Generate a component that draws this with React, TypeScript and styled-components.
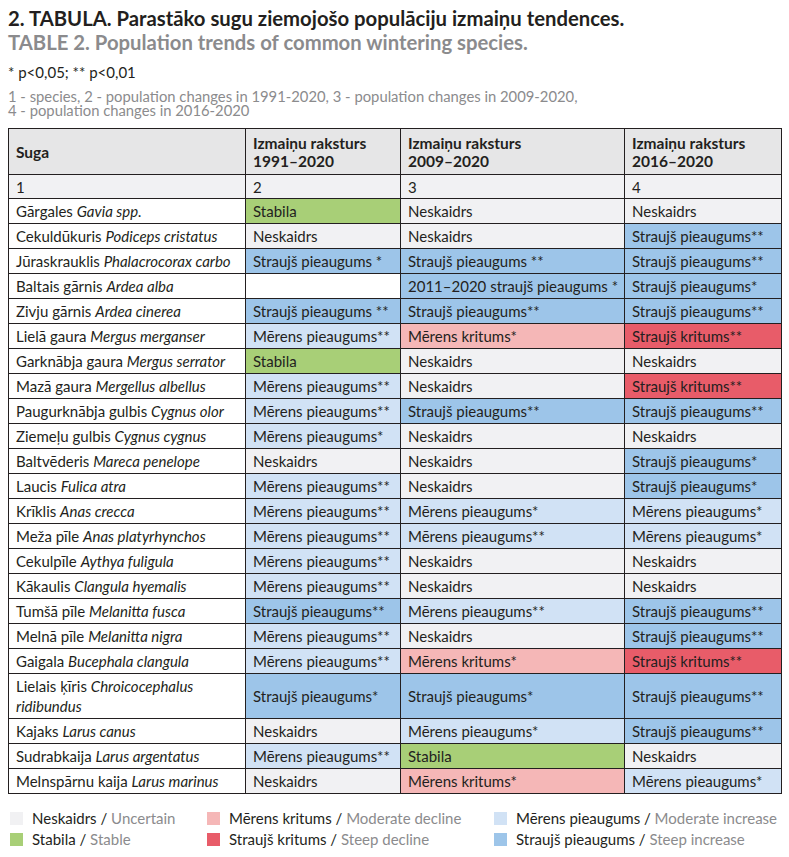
import React from "react";
import styled, { createGlobalStyle } from "styled-components";

const Global = createGlobalStyle`
  html, body { margin: 0; padding: 0; background: #fff; }
  body { font-family: Lato, "Open Sans", sans-serif; color: #231f20; }
`;

type Kind = "u" | "s" | "md" | "sd" | "mi" | "si" | "w";

const COLORS: Record<Kind, string> = {
  u: "#f1f1f3",
  s: "#a8cf77",
  md: "#f5b7b7",
  sd: "#e85c69",
  mi: "#d1e2f5",
  si: "#9dc5e9",
  w: "#ffffff",
};

const Page = styled.div`
  padding: 6px 8px 0 8px;
  width: 773px;
`;

const Title = styled.div<{ $gray?: boolean }>`
  font-weight: 700;
  font-size: 20.3px;
  line-height: 24px;
  white-space: nowrap;
  color: ${(p) => (p.$gray ? "#8b8b8d" : "#231f20")};
`;

const Sig = styled.div`
  font-size: 15px;
  margin-top: 9px;
  line-height: 18px;
`;

const Note = styled.div`
  font-size: 14.8px;
  line-height: 13.5px;
  color: #8b8b8d;
  margin-top: 9px;
`;

const Table = styled.table`
  margin-top: 11px;
  border-collapse: collapse;
  width: 773px;
  table-layout: fixed;
  font-size: 15px;
  border: 1.5px solid #231f20;
`;

const Th = styled.th`
  background: #e6e6e7;
  border: 1px solid #231f20;
  text-align: left;
  font-weight: 700;
  font-size: 15.5px;
  padding: 4px 7px;
  line-height: 18px;
  height: 37px;
  vertical-align: middle;
`;

const NumCell = styled.td`
  background: #f1f1f3;
  border: 1px solid #231f20;
  padding: 0 7px;
  height: 23px;
  line-height: 18px;
`;

const Cell = styled.td<{ $kind: Kind; $wrap?: boolean }>`
  background: ${(p) => COLORS[p.$kind]};
  border: 1px solid #231f20;
  padding: 2px 7px;
  height: 20px;
  line-height: 20px;
  vertical-align: middle;
  white-space: ${(p) => (p.$wrap ? "normal" : "nowrap")};
`;

const Latin = styled.i`
  font-style: italic;
`;

const Legend = styled.div`
  display: grid;
  grid-template-columns: 197px 287px 1fr;
  row-gap: 3px;
  margin-top: 15px;
  padding-left: 2px;
  font-size: 15px;
  line-height: 18px;
`;

const LegendItem = styled.div`
  display: flex;
  align-items: center;
  gap: 9px;
`;

const Swatch = styled.span<{ $kind: Kind }>`
  width: 13px;
  height: 13px;
  background: ${(p) => COLORS[p.$kind]};
  flex: none;
`;

const En = styled.span`
  color: #8b8b8d;
`;

type Row = [string, string, [string, Kind], [string, Kind], [string, Kind]];

const U: [string, Kind] = ["Neskaidrs", "u"];
const S: [string, Kind] = ["Stabila", "s"];

const rows: Row[] = [
  ["Gārgales", "Gavia spp.", S, U, U],
  ["Cekuldūkuris", "Podiceps cristatus", U, U, ["Straujš pieaugums**", "si"]],
  ["Jūraskrauklis", "Phalacrocorax carbo", ["Straujš pieaugums *", "si"], ["Straujš pieaugums **", "si"], ["Straujš pieaugums**", "si"]],
  ["Baltais gārnis", "Ardea alba", ["", "w"], ["2011–2020 straujš pieaugums *", "si"], ["Straujš pieaugums*", "si"]],
  ["Zivju gārnis", "Ardea cinerea", ["Straujš pieaugums **", "si"], ["Straujš pieaugums**", "si"], ["Straujš pieaugums**", "si"]],
  ["Lielā gaura", "Mergus merganser", ["Mērens pieaugums**", "mi"], ["Mērens kritums*", "md"], ["Straujš kritums**", "sd"]],
  ["Garknābja gaura", "Mergus serrator", S, U, U],
  ["Mazā gaura", "Mergellus albellus", ["Mērens pieaugums**", "mi"], U, ["Straujš kritums**", "sd"]],
  ["Paugurknābja gulbis", "Cygnus olor", ["Mērens pieaugums**", "mi"], ["Straujš pieaugums**", "si"], ["Straujš pieaugums**", "si"]],
  ["Ziemeļu gulbis", "Cygnus cygnus", ["Mērens pieaugums*", "mi"], U, U],
  ["Baltvēderis", "Mareca penelope", U, U, ["Straujš pieaugums*", "si"]],
  ["Laucis", "Fulica atra", ["Mērens pieaugums**", "mi"], U, ["Straujš pieaugums*", "si"]],
  ["Krīklis", "Anas crecca", ["Mērens pieaugums**", "mi"], ["Mērens pieaugums*", "mi"], ["Mērens pieaugums*", "mi"]],
  ["Meža pīle", "Anas platyrhynchos", ["Mērens pieaugums**", "mi"], ["Mērens pieaugums**", "mi"], ["Mērens pieaugums*", "mi"]],
  ["Cekulpīle", "Aythya fuligula", ["Mērens pieaugums**", "mi"], U, U],
  ["Kākaulis", "Clangula hyemalis", ["Mērens pieaugums**", "mi"], U, U],
  ["Tumšā pīle", "Melanitta fusca", ["Straujš pieaugums**", "si"], ["Mērens pieaugums**", "mi"], ["Straujš pieaugums**", "si"]],
  ["Melnā pīle", "Melanitta nigra", ["Mērens pieaugums**", "mi"], U, ["Straujš pieaugums**", "si"]],
  ["Gaigala", "Bucephala clangula", ["Mērens pieaugums**", "mi"], ["Mērens kritums*", "md"], ["Straujš kritums**", "sd"]],
  ["Lielais ķīris", "Chroicocephalus ridibundus", ["Straujš pieaugums*", "si"], ["Straujš pieaugums*", "si"], ["Straujš pieaugums**", "si"]],
  ["Kajaks", "Larus canus", U, ["Mērens pieaugums*", "mi"], ["Straujš pieaugums**", "si"]],
  ["Sudrabkaija", "Larus argentatus", ["Mērens pieaugums**", "mi"], S, U],
  ["Melnspārnu kaija", "Larus marinus", U, ["Mērens kritums*", "md"], ["Mērens pieaugums*", "mi"]],
];

const legend: [Kind, string, string][] = [
  ["u", "Neskaidrs", "Uncertain"],
  ["md", "Mērens kritums", "Moderate decline"],
  ["mi", "Mērens pieaugums", "Moderate increase"],
  ["s", "Stabila", "Stable"],
  ["sd", "Straujš kritums", "Steep decline"],
  ["si", "Straujš pieaugums", "Steep increase"],
];

export default function App() {
  return (
    <>
      <Global />
      <Page>
        <Title>2. TABULA. Parastāko sugu ziemojošo populāciju izmaiņu tendences.</Title>
        <Title $gray>TABLE 2. Population trends of common wintering species.</Title>
        <Sig>* p&lt;0,05; ** p&lt;0,01</Sig>
        <Note>
          1 - species, 2 - population changes in 1991-2020, 3 - population changes in 2009-2020,
          <br />4 - population changes in 2016-2020
        </Note>
        <Table>
          <colgroup>
            <col style={{ width: 237 }} />
            <col style={{ width: 155 }} />
            <col style={{ width: 224 }} />
            <col style={{ width: 157 }} />
          </colgroup>
          <thead>
            <tr>
              <Th>Suga</Th>
              <Th>Izmaiņu raksturs<br />1991–2020</Th>
              <Th>Izmaiņu raksturs<br />2009–2020</Th>
              <Th>Izmaiņu raksturs<br />2016–2020</Th>
            </tr>
          </thead>
          <tbody>
            <tr>
              <NumCell>1</NumCell>
              <NumCell>2</NumCell>
              <NumCell>3</NumCell>
              <NumCell>4</NumCell>
            </tr>
            {rows.map((r) => (
              <tr key={r[0]}>
                <Cell $kind="w" $wrap>
                  {r[0]} <Latin>{r[1]}</Latin>
                </Cell>
                {[r[2], r[3], r[4]].map((c, i) => (
                  <Cell key={i} $kind={c[1]}>{c[0]}</Cell>
                ))}
              </tr>
            ))}
          </tbody>
        </Table>
        <Legend>
          {legend.map(([k, lv, en]) => (
            <LegendItem key={k}>
              <Swatch $kind={k} />
              <span>
                {lv} / <En>{en}</En>
              </span>
            </LegendItem>
          ))}
        </Legend>
      </Page>
    </>
  );
}
